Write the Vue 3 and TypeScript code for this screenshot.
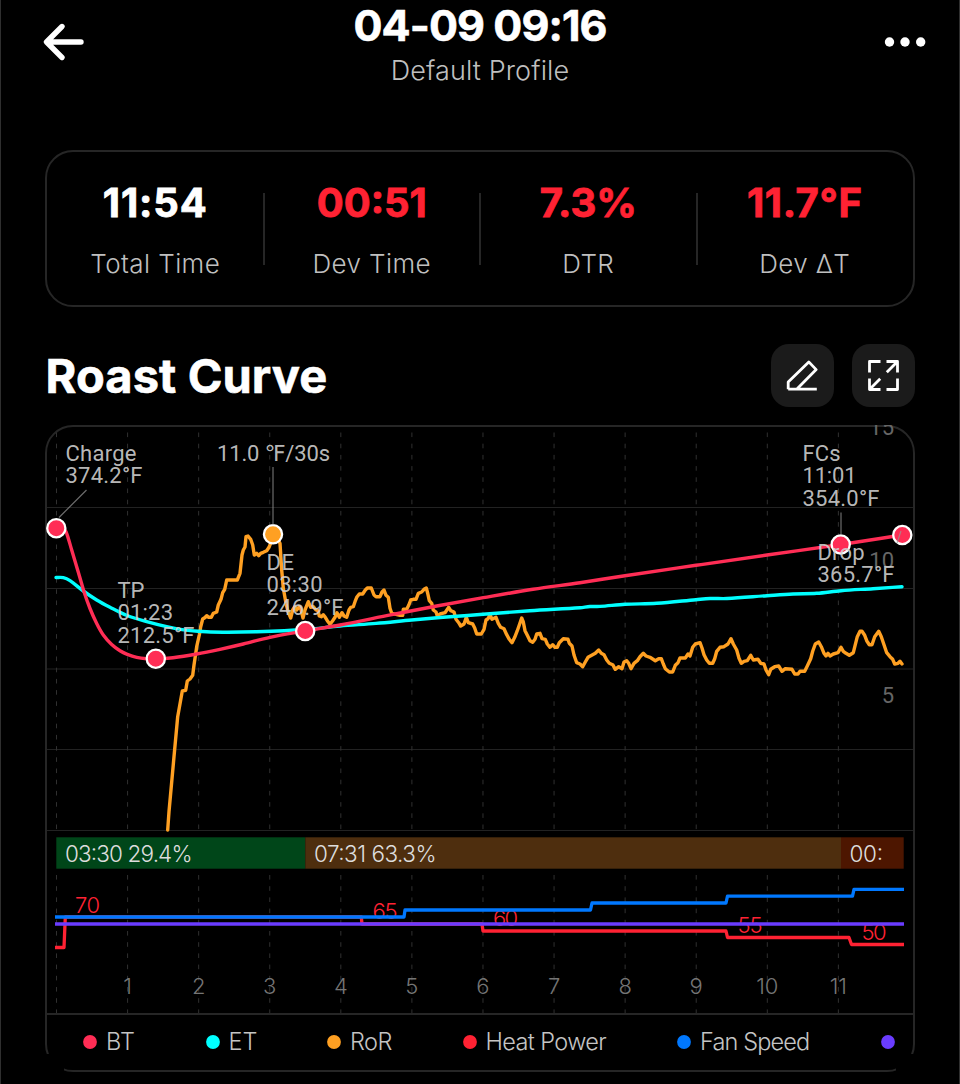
<script setup lang="ts">
interface Stat { value: string; label: string; alert: boolean; cls: string }
interface Marker { x: number; y: number; color: string }
interface Note { x: number; y: number; lines: { text: string; w: number }[] }

const stats: Stat[] = [
  { value: '11:54', label: 'Total Time', alert: false, cls: 's1' },
  { value: '00:51', label: 'Dev Time', alert: true, cls: 's2' },
  { value: '7.3%', label: 'DTR', alert: true, cls: 's3' },
  { value: '11.7°F', label: 'Dev ΔT', alert: true, cls: 's4' },
]

const legend = [
  { name: 'BT', color: '#ff2d55', cls: 'l1' },
  { name: 'ET', color: '#00ffff', cls: 'l2' },
  { name: 'RoR', color: '#ffa022', cls: 'l3' },
  { name: 'Heat Power', color: '#ff2233', cls: 'l4' },
  { name: 'Fan Speed', color: '#0078ff', cls: 'l5' },
  { name: '', color: '#6a3cff', cls: 'l6' },
]

const minuteX = (m: number): number => 56.5 + m * 71.08
const minutes: number[] = Array.from({ length: 12 }, (_, i) => i)
const gridY: number[] = [507.5, 588.5, 669, 749.5, 830.5]

const ror = `167.7,830 169,811.7 174,756.7 177.7,716.7 182.3,691 185.7,690.3 187.3,681 190,679 192.7,675.3 194,665 196.7,646.7 199.3,635
200.7,626.7 202.7,619 204.7,617.7 206.7,615.7 208.7,617.3 211.3,617.3 213.3,613.3 216.7,612 218.3,605 221,599.3 222.7,592.7 224.7,589.3
226.7,580 237.3,580 240,573.3 242,555 243.3,550 245,547 246,536.7 248,536 250.7,539.3 252.7,545 254.3,555 256.7,553.3 258.7,555.7
260.7,553.3 263.3,552.3 266.7,550.7 269,547.3 270.7,543 273,534 279,541.7 280,543.3 281.7,570 283.3,588.3 286,603.3 288,611.7 290.7,618
292.7,610 294.7,606.7 296.7,610 299.3,606.7 300.7,608.3 303,618 305,610 308.3,601.7 310.7,607.3 313.3,606.7 316,610 318,610.7 319.3,616
321.3,616.7 323.3,614.7 325.3,617.3 327.3,620.7 330,624.3 332.7,620.7 335,617.3 337,612.7 339.3,617.3 342,612.7 344,616 346.7,617.3
349,610 350.7,607.3 353.3,606.7 355,601.7 356.7,597.3 359.3,594 362.7,594 365.3,590 367.3,588 371.3,588 374,595 376,596.7 380,596.7
382,592 384,590 386,595.3 388.3,597.3 390,608.3 391.7,613.3 400,615.3 402.7,615.3 403.3,609.3 406.7,609.3 408.7,605.3 410.7,600
413.3,599.3 416,599.3 418.3,593.3 421.7,592 424,589.3 426.3,588 427.7,593.3 429.3,600.7 431.7,603.3 433.3,610 436,612 437.3,616
440,614 445,612.7 448.7,607.3 450.7,610.7 454,612 456,619.3 458.7,622.7 460.7,626 464,624 466.3,617.3 468.3,622.7 472.7,624 474.7,628
476.7,634 481.3,634 484,629.3 486,620 488,618.7 490,614.7 492,619.3 496,617.3 498.3,623.3 500.7,627.3 504,628.7 506.7,634.7
509.3,639.3 512,642.7 514.7,637.3 517.3,630.7 519.3,625 521.7,618 523.3,622 525,630.7 527.3,635.3 530,640.7 532.7,642.3 535,639.3
536.7,634 540,633.3 542,638.7 545.3,639.3 547.3,644 550,647.3 552.7,644.7 555,647.3 557.3,647.3 559.3,642.7 563.3,638.7 568,639.3
569.3,643.3 572,646 574,655 576.7,662.7 580,664 582.7,666.7 585.3,662 588,657.3 591.7,655.3 595.3,653.3 598.7,650 601.3,653.3
604,654.7 606.7,660 609.3,663.3 612.7,664.7 615.3,669.3 618.7,666.7 622,668.7 624,662 626.7,660.7 628.7,663.3 631,668.7 634,663.3
637.3,660.7 640,656.7 643.3,653.3 646,656 650,657.3 655.3,660.7 658.7,658.7 661.3,658.7 663.3,664 665.3,668.7 669.3,672 672.7,672
675.3,665.3 678,662.7 680,658 685.3,658 688,654 690,656 692.7,647.3 695.3,644 700,642.7 702,648 704,654.7 706.7,660 709.3,663.3
712.7,663.3 714.7,658.7 716.7,651.3 720,647.3 724,646.7 728,644 731,638.7 733.3,644 736.7,650 739,658.3 741.3,663.3 744,661.3
747.3,660.7 750.7,655.3 753.3,660 758,659.3 760.7,663.3 764,664 766,670 768.7,674.7 770.7,669.3 774.7,666.7 778.7,666 782,671.3
785.3,668.7 792,669.3 794.7,674 798,674 800,671.3 804.7,671.3 807.3,666 810.7,658.7 812.7,651.3 815.3,644 818.7,642 821.3,646.7
824,653.3 826,656 828,653.3 830,656 833.3,654 838,652.7 841,647.3 843.3,651.3 846,653.3 849.3,655.3 853.3,652.7 855.3,644.7
857.3,636.7 860,631.3 862,631.3 864.7,635.3 866.7,640.7 869.3,644.7 872,644.7 874.7,636.7 878.7,631.3 881.3,636.7 884,644.7
886.7,652.7 890,656.7 892.7,659.3 894.7,664 898,663.3 900,661.3 902,664`

const bt = `56,528 62,528.5 66,531.7 71.7,550 80,578 84,591.7 90,608.5 96.7,623.5 103.3,635 111.7,644.5 120,650.7 127.3,654.3 136.7,657.3 146.7,658.7
155.7,659 173,657.7 196.7,654 220,649.3 243.3,644 270,637.3 305,631 340,625 391.7,614.7 436.7,606 483.3,597.7 533,589.3 580,582.7
625,575.7 696,565.3 767,555 841,544.5 902,535`

const et = `56,577.5 63.3,577.7 70,580.7 83.3,591 96.7,600 110,607.3 127,615.5 146.7,621.7 166.7,626.7 182,629.6 198,631.3 223,632.2 256.7,631.7
305,629.5 340,626 376,623.4 411.7,620 443,617.3 483,614.3 530,610.7 580,607.7 590,606.5 600,606.4 625,604.3 656.7,603.3 696,599.7
710,598.5 727,598.5 767,595.7 793,594 816.7,593.3 841,590.7 873,588.7 902,586.7`

// Catmull-Rom spline through the sampled temperatures
function smooth(points: string): string {
  const p = points.trim().split(/\s+/).map((s) => s.split(',').map(Number))
  let d = `M${p[0][0]} ${p[0][1]}`
  for (let i = 0; i < p.length - 1; i++) {
    const a = p[Math.max(i - 1, 0)]
    const b = p[i]
    const c = p[i + 1]
    const e = p[Math.min(i + 2, p.length - 1)]
    const k = Math.min(c[0] - b[0], 1e3)
    const m1 = (c[1] - a[1]) / (c[0] - a[0])
    const m2 = (e[1] - b[1]) / (e[0] - b[0])
    d += `C${b[0] + k / 3} ${b[1] + (m1 * k) / 3} ${c[0] - k / 3} ${c[1] - (m2 * k) / 3} ${c[0]} ${c[1]}`
  }
  return d
}
const btPath = smooth(bt)
const etPath = smooth(et)

const markers: Marker[] = [
  { x: 56.3, y: 528.2, color: '#ff2d55' },
  { x: 155.8, y: 658.7, color: '#ff2d55' },
  { x: 273, y: 534.3, color: '#ffa022' },
  { x: 305.2, y: 631, color: '#ff2d55' },
  { x: 840.7, y: 544.5, color: '#ff2d55' },
  { x: 902.3, y: 535, color: '#ff2d55' },
]

const notes: Note[] = [
  { x: 65.5, y: 460.7, lines: [{ text: 'Charge', w: 71 }, { text: '374.2°F', w: 77 }] },
  { x: 217, y: 460.7, lines: [{ text: '11.0 ℉/30s', w: 113 }] },
  { x: 117.5, y: 598, lines: [{ text: 'TP', w: 27 }, { text: '01:23', w: 55.5 }, { text: '212.5°F', w: 77 }] },
  { x: 266.5, y: 570, lines: [{ text: 'DE', w: 27.5 }, { text: '03:30', w: 56 }, { text: '246.9°F', w: 77 }] },
  { x: 802.5, y: 460.7, lines: [{ text: 'FCs', w: 38 }, { text: '11:01', w: 54 }, { text: '354.0°F', w: 77 }] },
  { x: 817.5, y: 560, lines: [{ text: 'Drop', w: 47 }, { text: '365.7°F', w: 77 }] },
]

const powerLabels = [
  { text: '70', x: 87.5, y: 913 },
  { text: '65', x: 385, y: 918.5 },
  { text: '60', x: 505.5, y: 925.5 },
  { text: '55', x: 750, y: 932.7 },
  { text: '50', x: 874, y: 940 },
]
</script>

<template>
  <main class="screen">
    <header class="topbar">
      <svg class="back" viewBox="0 0 44 40" width="44" height="40">
        <path d="M39 20H5M20 4.5L4.5 20L20 35.5" />
      </svg>
      <div class="heading">
        <h1>04-09 09:16</h1>
        <p>Default Profile</p>
      </div>
      <svg class="more" viewBox="0 0 44 12" width="44" height="12">
        <circle cx="6.5" cy="6" r="4.7" /><circle cx="22" cy="6" r="4.7" /><circle cx="37.7" cy="6" r="4.7" />
      </svg>
    </header>

    <section class="stats">
      <div v-for="s in stats" :key="s.label" class="stat" :class="[s.cls, { alert: s.alert }]">
        <strong>{{ s.value }}</strong>
        <span>{{ s.label }}</span>
      </div>
    </section>

    <div class="section-head">
      <h2>Roast Curve</h2>
      <div class="actions">
        <button aria-label="Edit">
          <svg viewBox="0 0 63 63" width="63" height="63">
            <path d="M17.2 45.2V38L37.8 17.9L45.2 25.6L25.7 45.2M17.2 45.2H45.8" />
          </svg>
        </button>
        <button aria-label="Full screen">
          <svg viewBox="0 0 63 63" width="63" height="63">
            <path d="M17.5 28.5V17.5H28.5M34.5 45.5H45.5V34.5M34.5 17.5H45.5V28.5M45 18L34.8 28.2M17.5 34.5V45.5H28.5M18 45L28.2 34.8" />
          </svg>
        </button>
      </div>
    </div>

    <section class="chart-card">
      <svg class="chart" viewBox="45 425 870 588" width="870" height="588">
        <g class="grid">
          <line v-for="y in gridY" :key="y" x1="47" x2="913" :y1="y" :y2="y" />
        </g>
        <g class="dashes">
          <template v-for="m in minutes" :key="m">
            <line :x1="minuteX(m)" :x2="minuteX(m)" y1="432.5" y2="830" />
            <line :x1="minuteX(m)" :x2="minuteX(m)" y1="875" y2="1013" />
          </template>
        </g>
        <g class="axis">
          <text x="894" y="434.8" text-anchor="end">15</text>
          <text x="894" y="568" text-anchor="end">10</text>
          <text x="894" y="703" text-anchor="end">5</text>
        </g>
        <g class="ticks">
          <text v-for="m in 11" :key="m" :x="minuteX(m)" y="993.5" text-anchor="middle">{{ m }}</text>
        </g>

        <g class="curves">
          <polyline :points="ror" stroke="#ffa022" />
          <path :d="etPath" stroke="#00ffff" />
          <path :d="btPath" stroke="#ff2d55" />
        </g>
        <g class="markers">
          <circle v-for="(k, i) in markers" :key="i" :cx="k.x" :cy="k.y" r="9.1" :fill="k.color" />
        </g>
        <g class="leaders">
          <path d="M86.5 490L59 517.5M273 467V525M841 512.5V535M897 543L901 531" />
        </g>
        <g class="notes">
          <template v-for="(n, i) in notes" :key="i">
            <text v-for="(l, j) in n.lines" :key="j" :x="n.x" :y="n.y + j * 22.4" :textLength="l.w">{{ l.text }}</text>
          </template>
        </g>

        <g>
          <rect x="56.3" y="837.3" width="249" height="31.4" fill="#004619" />
          <rect x="305.3" y="837.3" width="535.7" height="31.4" fill="#4e2e0e" />
          <rect x="841" y="837.3" width="62.7" height="31.4" fill="#4d1600" />
        </g>
        <g class="phases">
          <text x="65" y="862" textLength="127.5">03:30 29.4%</text>
          <text x="314" y="862" textLength="122.5">07:31 63.3%</text>
          <text x="849.5" y="862" textLength="33.5">00:</text>
        </g>

        <g class="power">
          <text v-for="p in powerLabels" :key="p.text" :x="p.x" :y="p.y" text-anchor="middle" textLength="25">{{ p.text }}</text>
        </g>
        <g class="steps">
          <path stroke="#ff2233" d="M55 947.5H64L65.3 917H361.3L362 924H482L483 931H726L727.5 937.5H849L851.5 944.5H904" />
          <path stroke="#0078ff" d="M55 917H404L405 910H590.5L592 903H726L727.5 896.2H852.5L854 889.3H904" />
          <path stroke="#6a3cff" d="M55 924H904" />
        </g>
      </svg>
      <ul class="legend">
        <li v-for="l in legend" :key="l.cls" :class="l.cls">
          <svg width="14" height="14" viewBox="0 0 14 14"><circle cx="7" cy="7" r="6.9" :fill="l.color" /></svg>
          <span v-if="l.name">{{ l.name }}</span>
        </li>
      </ul>
    </section>
  </main>
</template>

<style>
body { background: #000; overflow: hidden; }
</style>

<style scoped>
* { box-sizing: border-box; margin: 0; padding: 0; }
.screen {
  width: 960px; height: 1084px; overflow: hidden; background: #000; color: #fff;
  border-left: 1px solid #2f2f2f; border-right: 1px solid #2f2f2f;
  padding: 0 44px;
  font-family: Inter, "Liberation Sans", sans-serif;
}
.topbar { height: 150px; display: flex; justify-content: space-between; align-items: flex-start; margin: 0 -12.5px 0 -3.5px; }
.back { margin-top: 22px; fill: none; stroke: #fff; stroke-width: 5.4; stroke-linecap: round; stroke-linejoin: round; }
.more { margin-top: 36px; fill: #fff; }
.heading { display: flex; flex-direction: column; align-items: center; margin-left: -9px; }
h1 { font-size: 43px; line-height: 52px; margin-top: -1px; font-weight: 700; letter-spacing: -0.9px; white-space: nowrap; -webkit-text-stroke: 0.6px #fff; }
.heading p { font-size: 27px; line-height: 34px; margin-top: 3px; font-weight: 300; color: #bfbfbf; letter-spacing: 0.1px; white-space: nowrap; }
.stats { height: 157px; border: 2px solid #262626; border-radius: 28px; display: grid; grid-template-columns: repeat(4, 1fr); }
.stat { display: flex; flex-direction: column; align-items: center; position: relative; white-space: nowrap; }
.stat + .stat::before { content: ""; position: absolute; left: -1px; top: 41px; width: 2px; height: 72px; background: #262626; }
.stat strong { margin-top: 26.5px; font-size: 40px; line-height: 48px; font-weight: 700; -webkit-text-stroke: 0.8px currentColor; }
.s1 strong { letter-spacing: 0.9px; }
.s4 strong { letter-spacing: 0.6px; }
.stat span { margin-top: 20px; font-size: 26px; line-height: 34px; font-weight: 300; color: #bfbfbf; letter-spacing: 0.4px; }
.alert strong { color: #ff2233; }
.section-head { height: 118px; display: flex; justify-content: space-between; align-items: flex-start; padding-top: 36.5px; }
h2 { font-size: 47px; line-height: 64px; font-weight: 700; white-space: nowrap; margin-left: 0.5px; letter-spacing: 0.1px; -webkit-text-stroke: 0.6px #fff; }
.actions { display: flex; gap: 18px; }
button { width: 63px; height: 63px; border: 0; border-radius: 18px; background: #1b1b1b; }
button svg { display: block; fill: none; stroke: #fff; stroke-width: 2.8; stroke-linejoin: round; }
.chart-card { height: 647px; border: 2px solid #262626; border-radius: 28px; position: relative; }
/* the lower corners of the frame fade out */
.chart-card::before, .chart-card::after { content: ""; position: absolute; bottom: -2px; width: 19px; height: 18px; background: #000; }
.chart-card::before { left: -2px; }
.chart-card::after { right: -2px; }
.chart { display: block; margin: -2px 0 0 -2px; width: 870px; }
.grid line { stroke: #222; stroke-width: 1; }
.dashes line { stroke: #303030; stroke-width: 1; stroke-dasharray: 4.6 6.6; }
.axis text { font: 400 22px Roboto, sans-serif; fill: #666; }
.ticks text { font: 300 22px Inter, sans-serif; fill: #757575; }
.curves > * { fill: none; stroke-width: 3.4; stroke-linecap: round; stroke-linejoin: round; }
.markers circle { stroke: #fff; stroke-width: 2.3; }
.leaders path { fill: none; stroke: #999; stroke-opacity: .7; stroke-width: 1.2; }
.notes text { font: 400 22px Roboto, "DejaVu Sans", sans-serif; fill: #d0d0d0; fill-opacity: .9; }
.phases text { font: 300 22.5px Inter, sans-serif; fill: #ddd; }
.power text { font: 300 22px Inter, sans-serif; fill: #ff2233; }
.steps path { fill: none; stroke-width: 3.3; stroke-linejoin: round; }
.legend { list-style: none; height: 56px; border-top: 2px solid #262626; display: flex; align-items: center; padding-left: 36px; }
.legend li { display: flex; align-items: center; flex: none; height: 34px; white-space: nowrap; }
.legend span { margin-left: 9px; font-size: 23.5px; line-height: 34px; font-weight: 300; color: #c4c4c4; }
.l1 { width: 122.5px; } .l2 { width: 121.5px; } .l3 { width: 135.5px; } .l4 { width: 214.5px; } .l5 { width: 203.5px; }
.legend .l3 span { letter-spacing: -0.5px; }
.legend .l4 span { letter-spacing: -0.6px; }
.legend .l5 span { letter-spacing: -0.85px; }
</style>
